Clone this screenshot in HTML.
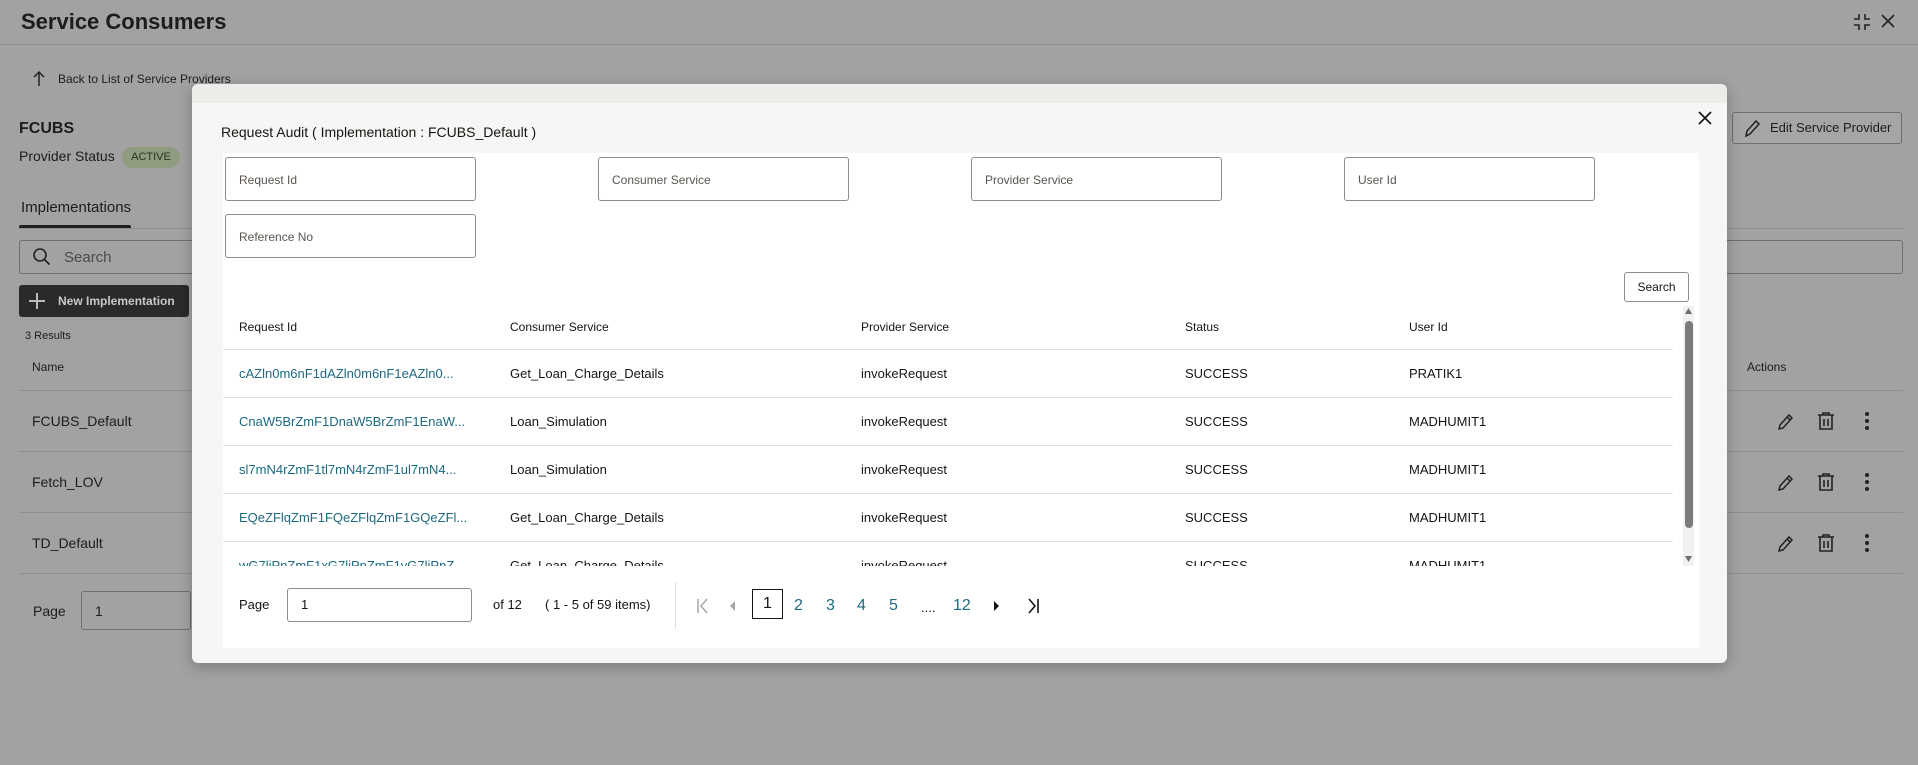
<!DOCTYPE html>
<html><head><meta charset="utf-8">
<style>
*{margin:0;padding:0;box-sizing:border-box}
body{width:1918px;height:765px;overflow:hidden;background:#a2a2a2;font-family:"Liberation Sans",sans-serif;position:relative;color:#161513}
.a{position:absolute;white-space:nowrap}
.bg{color:#1c1c1c}
.hl{position:absolute;height:1px;background:#8f8f8f}
.modal{position:absolute;left:192px;top:84px;width:1535px;height:579px;background:#f7f6f4;border-radius:6px;box-shadow:0 4px 14px rgba(0,0,0,.25);overflow:hidden}
.mhead{position:absolute;left:0;top:0;width:100%;height:19px;background:#eeece9}
.panel{position:absolute;left:31px;top:69px;width:1476px;height:495px;background:#fff}
.inp{position:absolute;width:251px;height:44px;border:1px solid #8f8b86;border-radius:3px;font-size:12px;color:#5a5550;padding:15px 0 0 13px}
.th{position:absolute;font-size:12px;color:#161513;top:236px}
.td{position:absolute;font-size:13px;color:#161513}
.lk{color:#1d6a80}
.rl{position:absolute;left:0;width:1450px;height:1px;background:#e2e0dd}
.pg{position:absolute;font-size:16px;color:#1d6a80;top:444px}
</style></head><body>
<div class="a bg" style="left:21px;top:9px;font-size:22px;font-weight:bold">Service Consumers</div>
<div class="hl" style="left:0;top:44px;width:1918px"></div>
<svg class="a" style="left:1852px;top:12px" width="20" height="20" viewBox="0 0 20 20" fill="none" stroke="#222" stroke-width="1.6"><path d="M7 2v5H2M13 2v5h5M7 18v-5H2M13 18v-5h5"/></svg>
<svg class="a" style="left:1880px;top:13px" width="16" height="16" viewBox="0 0 16 16" stroke="#222" stroke-width="1.6"><path d="M2 2l12 12M14 2L2 14"/></svg>
<svg class="a" style="left:32px;top:70px" width="14" height="17" viewBox="0 0 14 17" fill="none" stroke="#222" stroke-width="1.5"><path d="M7 16V2M2 7l5-5 5 5"/></svg>
<div class="a bg" style="left:58px;top:72px;font-size:12px">Back to List of Service Providers</div>
<div class="a bg" style="left:19px;top:120px;font-size:16px;font-weight:bold">FCUBS</div>
<div class="a bg" style="left:19px;top:148px;font-size:14px">Provider Status</div>
<div class="a" style="left:122px;top:147px;width:58px;height:21px;border-radius:11px;background:#8f9c80;font-size:11px;color:#2a3322;text-align:center;line-height:21px">ACTIVE</div>
<div class="a bg" style="left:21px;top:199px;font-size:15px">Implementations</div>
<div class="a" style="left:19px;top:225px;width:112px;height:4px;background:#1e1e1e;border-radius:2px"></div>
<div class="hl" style="left:19px;top:228px;width:1884px"></div>
<div class="a" style="left:19px;top:240px;width:1884px;height:34px;border:1px solid #6f6f6f;border-radius:3px"></div>
<svg class="a" style="left:32px;top:247px" width="20" height="20" viewBox="0 0 20 20" fill="none" stroke="#222" stroke-width="1.6"><circle cx="8" cy="8" r="6"/><path d="M12.5 12.5l5 5"/></svg>
<div class="a" style="left:64px;top:249px;font-size:15px;color:#4a4a4a">Search</div>
<div class="a" style="left:1732px;top:112px;width:170px;height:32px;border:1px solid #6f6f6f;border-radius:3px;background:#a6a6a6"></div>
<svg class="a" style="left:1743px;top:118px" width="18" height="20" viewBox="0 0 18 20" fill="none" stroke="#222" stroke-width="1.5"><path d="M3 18l1-5L13 3l3 3-9 10z"/></svg>
<div class="a bg" style="left:1770px;top:120px;font-size:13px">Edit Service Provider</div>
<div class="a" style="left:19px;top:285px;width:170px;height:32px;background:#2a2a2a;border-radius:3px"></div>
<svg class="a" style="left:28px;top:292px" width="18" height="18" viewBox="0 0 18 18" stroke="#bbb" stroke-width="2"><path d="M9 1v16M1 9h16"/></svg>
<div class="a" style="left:58px;top:294px;font-size:12px;font-weight:bold;color:#c8c8c8">New Implementation</div>
<div class="a bg" style="left:25px;top:330px;font-size:11px">3 Results</div>
<div class="a bg" style="left:32px;top:360px;font-size:12px">Name</div>
<div class="a bg" style="left:1747px;top:360px;font-size:12px">Actions</div>
<div class="hl" style="left:19px;top:390px;width:1884px"></div>
<div class="hl" style="left:19px;top:451px;width:1884px"></div>
<div class="hl" style="left:19px;top:512px;width:1884px"></div>
<div class="hl" style="left:19px;top:573px;width:1884px"></div>
<div class="a bg" style="left:32px;top:413px;font-size:14px">FCUBS_Default</div>
<div class="a bg" style="left:32px;top:474px;font-size:14px">Fetch_LOV</div>
<div class="a bg" style="left:32px;top:535px;font-size:14px">TD_Default</div>
<svg class="a" style="left:1776px;top:411px" width="20" height="145" viewBox="0 0 20 145" fill="none" stroke="#222" stroke-width="1.5"><path d="M3 18l1-4 9-10 3 3-9 10zM11 6l3 3"/><path transform="translate(0,61)" d="M3 18l1-4 9-10 3 3-9 10zM11 6l3 3"/><path transform="translate(0,122)" d="M3 18l1-4 9-10 3 3-9 10zM11 6l3 3"/></svg>
<svg class="a" style="left:1817px;top:411px" width="18" height="145" viewBox="0 0 18 145" fill="none" stroke="#222" stroke-width="1.6"><path d="M1 4h16M6 4V2h6v2M3 4v14h12V4M7 8v7M11 8v7"/><path transform="translate(0,61)" d="M1 4h16M6 4V2h6v2M3 4v14h12V4M7 8v7M11 8v7"/><path transform="translate(0,122)" d="M1 4h16M6 4V2h6v2M3 4v14h12V4M7 8v7M11 8v7"/></svg>
<svg class="a" style="left:1864px;top:411px" width="6" height="145" viewBox="0 0 6 145" fill="#222"><circle cx="3" cy="3" r="2"/><circle cx="3" cy="10" r="2"/><circle cx="3" cy="17" r="2"/><circle cx="3" cy="64" r="2"/><circle cx="3" cy="71" r="2"/><circle cx="3" cy="78" r="2"/><circle cx="3" cy="125" r="2"/><circle cx="3" cy="132" r="2"/><circle cx="3" cy="139" r="2"/></svg>
<div class="a bg" style="left:33px;top:603px;font-size:14px">Page</div>
<div class="a" style="left:81px;top:591px;width:110px;height:39px;border:1px solid #6f6f6f;border-radius:3px"></div>
<div class="a bg" style="left:95px;top:603px;font-size:14px">1</div>

<div class="modal">
 <div class="mhead"></div>
 <div class="a" style="left:29px;top:40px;font-size:14px">Request Audit ( Implementation : FCUBS_Default )</div>
 <svg class="a" style="left:1506px;top:27px" width="14" height="14" viewBox="0 0 14 14" stroke="#161513" stroke-width="1.7"><path d="M1 1l12 12M13 1L1 13"/></svg>
 <div class="panel">
  <div class="inp" style="left:2px;top:4px">Request Id</div>
  <div class="inp" style="left:375px;top:4px">Consumer Service</div>
  <div class="inp" style="left:748px;top:4px">Provider Service</div>
  <div class="inp" style="left:1121px;top:4px">User Id</div>
  <div class="inp" style="left:2px;top:61px">Reference No</div>
  <div class="a" style="left:1401px;top:119px;width:65px;height:30px;border:1px solid #8f8b86;border-radius:3px;font-size:12px;text-align:center;line-height:28px">Search</div>
  <div class="th" style="left:16px;top:167px">Request Id</div>
  <div class="th" style="left:287px;top:167px">Consumer Service</div>
  <div class="th" style="left:638px;top:167px">Provider Service</div>
  <div class="th" style="left:962px;top:167px">Status</div>
  <div class="th" style="left:1186px;top:167px">User Id</div>
  <div class="rl" style="top:196px"></div>
  <div style="position:absolute;left:0;top:197px;width:1455px;height:216px;overflow:hidden">
   <div class="rl" style="top:47px"></div><div class="rl" style="top:95px"></div><div class="rl" style="top:143px"></div><div class="rl" style="top:191px"></div>
   <div class="td lk" style="left:16px;top:16px">cAZln0m6nF1dAZln0m6nF1eAZln0...</div>
   <div class="td" style="left:287px;top:16px">Get_Loan_Charge_Details</div><div class="td" style="left:638px;top:16px">invokeRequest</div><div class="td" style="left:962px;top:16px">SUCCESS</div><div class="td" style="left:1186px;top:16px">PRATIK1</div>
   <div class="td lk" style="left:16px;top:64px">CnaW5BrZmF1DnaW5BrZmF1EnaW...</div>
   <div class="td" style="left:287px;top:64px">Loan_Simulation</div><div class="td" style="left:638px;top:64px">invokeRequest</div><div class="td" style="left:962px;top:64px">SUCCESS</div><div class="td" style="left:1186px;top:64px">MADHUMIT1</div>
   <div class="td lk" style="left:16px;top:112px">sl7mN4rZmF1tl7mN4rZmF1ul7mN4...</div>
   <div class="td" style="left:287px;top:112px">Loan_Simulation</div><div class="td" style="left:638px;top:112px">invokeRequest</div><div class="td" style="left:962px;top:112px">SUCCESS</div><div class="td" style="left:1186px;top:112px">MADHUMIT1</div>
   <div class="td lk" style="left:16px;top:160px">EQeZFlqZmF1FQeZFlqZmF1GQeZFl...</div>
   <div class="td" style="left:287px;top:160px">Get_Loan_Charge_Details</div><div class="td" style="left:638px;top:160px">invokeRequest</div><div class="td" style="left:962px;top:160px">SUCCESS</div><div class="td" style="left:1186px;top:160px">MADHUMIT1</div>
   <div class="td lk" style="left:16px;top:208px">wG7liPnZmF1xG7liPnZmF1yG7liPnZ...</div>
   <div class="td" style="left:287px;top:208px">Get_Loan_Charge_Details</div><div class="td" style="left:638px;top:208px">invokeRequest</div><div class="td" style="left:962px;top:208px">SUCCESS</div><div class="td" style="left:1186px;top:208px">MADHUMIT1</div>
  </div>
  <div class="a" style="left:1460px;top:153px;width:11px;height:260px;background:#f1f1f1"></div>
  <svg class="a" style="left:1461px;top:154px" width="9" height="8" viewBox="0 0 9 8" fill="#6e6e6e"><path d="M4.5 1L8 7H1z"/></svg>
  <div class="a" style="left:1462px;top:168px;width:8px;height:207px;background:#7b7b7b;border-radius:4px"></div>
  <svg class="a" style="left:1461px;top:402px" width="9" height="8" viewBox="0 0 9 8" fill="#6e6e6e"><path d="M4.5 7L8 1H1z"/></svg>
  <div class="td" style="left:16px;top:444px">Page</div>
  <div class="a" style="left:64px;top:435px;width:185px;height:34px;border:1px solid #8f8b86;border-radius:3px"></div>
  <div class="td" style="left:78px;top:444px">1</div>
  <div class="td" style="left:270px;top:444px">of 12</div>
  <div class="td" style="left:322px;top:444px">( 1 - 5 of 59 items)</div>
  <div class="a" style="left:452px;top:429px;width:1px;height:47px;background:#e2e0dd"></div>
  <svg class="a" style="left:473px;top:445px" width="14" height="16" viewBox="0 0 14 16" fill="none" stroke="#a8a6a3" stroke-width="1.5"><path d="M2 1v14M11 1L5 8l6 7"/></svg>
  <svg class="a" style="left:505px;top:447px" width="8" height="12" viewBox="0 0 8 12" fill="#a8a6a3"><path d="M7 1L2 6l5 5z"/></svg>
  <div class="a" style="left:529px;top:436px;width:31px;height:30px;border:1px solid #161513;font-size:16px;text-align:center;line-height:28px">1</div>
  <div class="pg" style="left:571px">2</div><div class="pg" style="left:603px">3</div><div class="pg" style="left:634px">4</div><div class="pg" style="left:666px">5</div>
  <div class="pg" style="left:698px;color:#161513;font-size:13px;top:447px">....</div>
  <div class="pg" style="left:730px">12</div>
  <svg class="a" style="left:770px;top:447px" width="8" height="12" viewBox="0 0 8 12" fill="#161513"><path d="M1 1l5 5-5 5z"/></svg>
  <svg class="a" style="left:803px;top:445px" width="14" height="16" viewBox="0 0 14 16" fill="none" stroke="#161513" stroke-width="1.6"><path d="M12 1v14M3 1l6 7-6 7"/></svg>
 </div>
</div>
</body></html>
